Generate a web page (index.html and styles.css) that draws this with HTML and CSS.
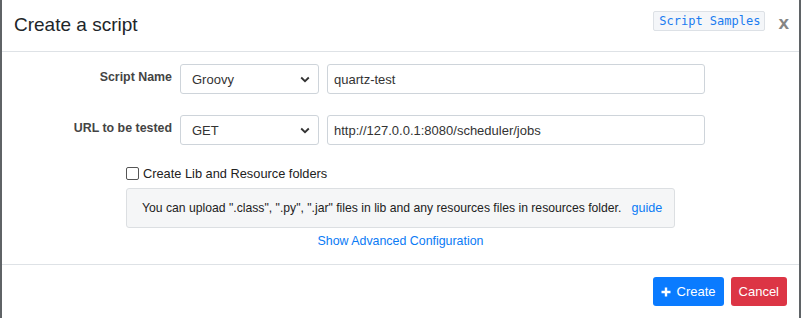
FILE: index.html
```html
<!DOCTYPE html>
<html lang="en">
  <head>
    <meta charset="UTF-8" />
    <meta name="viewport" content="width=device-width, initial-scale=1.0" />
    <title>Create a script</title>
    <link rel="stylesheet" href="styles.css">
  </head>
  <body>
    <div class="modal">
      <div class="modal-header">
        <h5 class="modal-title">Create a script</h5>
        <code class="samples">Script Samples</code>
        <span class="close">x</span>
      </div>

      <div class="modal-body">
        <div class="form-row">
          <label class="row-label">Script Name</label>
          <div class="select">
            <span>Groovy</span>
            <svg width="10" height="7" viewBox="0 0 10 7"><path d="M1.2 1.5 L5 5.2 L8.8 1.5" fill="none" stroke="#333" stroke-width="1.8"/></svg>
          </div>
          <div class="text-input">quartz-test</div>
        </div>
        <div class="form-row">
          <label class="row-label">URL to be tested</label>
          <div class="select">
            <span>GET</span>
            <svg width="10" height="7" viewBox="0 0 10 7"><path d="M1.2 1.5 L5 5.2 L8.8 1.5" fill="none" stroke="#333" stroke-width="1.8"/></svg>
          </div>
          <div class="text-input">http://127.0.0.1:8080/scheduler/jobs</div>
        </div>

        <label class="check">
          <span class="check-box"></span>
          Create Lib and Resource folders
        </label>
        <div class="info">
          <span>You can upload ".class", ".py", ".jar" files in lib and any resources files in resources folder.</span>
          <a class="link" href="#">guide</a>
        </div>
        <div class="advanced">
          <a class="link" href="#">Show Advanced Configuration</a>
        </div>
      </div>

      <div class="modal-footer">
        <button class="btn btn-primary">
          <svg width="10" height="10" viewBox="0 0 10 10"><path d="M5 0.5 V9.5 M0.5 5 H9.5" stroke="#fff" stroke-width="2.4"/></svg>
          Create
        </button>
        <button class="btn btn-danger">Cancel</button>
      </div>
    </div>
  </body>
</html>
```

FILE: styles.css
```css
body {
  margin: 0;
  padding: 0;
  height: 318px;
  overflow: hidden;
  background: #5f6366;
  font-family: "Liberation Sans", Arial, Helvetica, sans-serif;
  font-size: 12.4px;
  color: #333;
}
.modal {
  margin: 0 2px;
  height: 318px;
  background-color: #fff;
}
.modal-header {
  height: 51px;
  display: flex;
  align-items: center;
  padding: 0 10px 0 12px;
  border-bottom: 1px solid #dee2e6;
}
.modal-title {
  margin: 0 auto 2px 0;
  font-size: 19px;
  font-weight: 500;
  color: #212529;
}
.samples {
  font-family: "DejaVu Sans Mono", monospace;
  font-size: 12px;
  color: #1a7cf0;
  background-color: #f4f6f9;
  border: 1px solid #dde1e6;
  border-radius: 2px;
  padding: 2px 4px 1px 5px;
  line-height: 15px;
  margin-top: -10px;
}
.close {
  margin-left: 13px;
  margin-top: -5px;
  font-size: 19px;
  font-weight: bold;
  color: #858585;
}
.modal-body {
  padding-top: 12px;
  height: 200px;
}
.form-row {
  display: grid;
  grid-template-columns: 170px 139px 378px;
  column-gap: 8px;
  height: 30px;
  margin-bottom: 21px;
}
.row-label {
  align-self: center;
  text-align: right;
  font-weight: bold;
  color: #444;
  margin-top: -5px;
}
.select,
.text-input {
  border: 1px solid #ced4da;
  border-radius: 3px;
  display: flex;
  align-items: center;
  color: #333;
  font-size: 13px;
}
.select {
  justify-content: space-between;
  padding: 0 8px 0 11px;
}
.text-input {
  padding: 0 6px;
}
.check {
  display: flex;
  align-items: center;
  gap: 4px;
  margin: -2px 0 0 124px;
  height: 18px;
  color: #222;
  font-size: 12.8px;
}
.check-box {
  width: 11px;
  height: 11px;
  border: 1px solid #555;
  border-radius: 2px;
}
.info {
  margin: 6px 0 0 124px;
  width: 517px;
  height: 38px;
  padding: 0 15px;
  background-color: #f5f6f7;
  border: 1px solid #dcdfe2;
  border-radius: 3px;
  display: flex;
  align-items: center;
  gap: 10px;
  color: #222;
  font-size: 12.2px;
  white-space: nowrap;
}
.info .link {
  font-size: 12.6px;
}
.link {
  color: #0a7bf5;
  text-decoration: none;
}
.advanced {
  text-align: center;
  margin-top: 6px;
  font-size: 12.4px;
}
.modal-footer {
  border-top: 1px solid #dee2e6;
  display: flex;
  justify-content: flex-end;
  gap: 7px;
  padding: 12px 12px 0 0;
}
.btn {
  height: 29px;
  border: none;
  border-radius: 3px;
  color: #fff;
  font-family: "Liberation Sans", Arial, sans-serif;
  font-size: 13px;
  padding: 0 8px;
  display: flex;
  align-items: center;
  gap: 6px;
}
.btn-primary {
  background-color: #0a7bff;
}
.btn-danger {
  background-color: #dc3545;
}
```
